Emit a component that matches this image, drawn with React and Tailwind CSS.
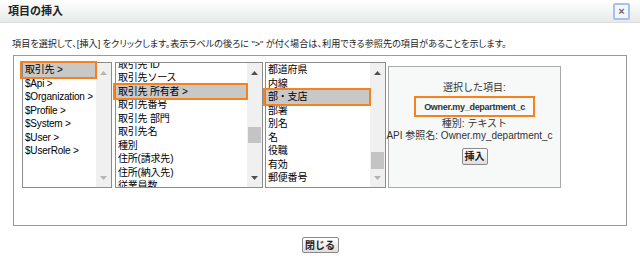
import React from "react";

const FONT = "[font-family:'Liberation_Sans','Noto_Sans_CJK_JP',sans-serif]";

function Arrow({ dir, disabled }) {
  const color = disabled ? "#b4b4b4" : "#505050";
  return (
    <svg width="7" height="4" viewBox="0 0 7 4">
      {dir === "up" ? (
        <polygon points="0,4 7,4 3.5,0" fill={color} />
      ) : (
        <polygon points="0,0 7,0 3.5,4" fill={color} />
      )}
    </svg>
  );
}

function Scrollbar({ thumbTop, thumbH, disabled, downDisabled }) {
  return (
    <div className="flex w-[15px] shrink-0 flex-col bg-[#f0f0f0]">
      <div className="flex h-[20px] items-center justify-center">
        <Arrow dir="up" disabled={disabled} />
      </div>
      <div className="flex-1">
        {thumbH ? (
          <div
            className="mx-[1px] bg-[#c4c4c4]"
            style={{ marginTop: thumbTop, height: thumbH }}
          />
        ) : null}
      </div>
      <div className="flex h-[18px] items-center justify-center">
        <Arrow dir="down" disabled={disabled || downDisabled} />
      </div>
    </div>
  );
}

const ROW = 13.5;

function List({ items, selected, width, offset = 0, scroll }) {
  return (
    <div
      className="relative flex h-[126px] shrink-0 border border-[#8c8c8c] bg-white"
      style={{ width }}
    >
      <div className="relative flex-1 overflow-hidden">
        <div style={{ marginTop: offset }}>
          {items.map((t, i) => (
            <div
              key={i}
              className={
                "h-[13.5px] whitespace-nowrap pl-[2px] text-[10px] leading-[13.5px] tracking-[-0.2px] text-black " +
                (i === selected ? "bg-[#c8c8c8]" : "")
              }
            >
              {t}
            </div>
          ))}
        </div>
      </div>
      <Scrollbar {...scroll} />
      <div
        className="pointer-events-none absolute left-[-3px] right-[14px] border-2 border-[#f5821f]"
        style={{ top: offset + selected * ROW - 2, height: ROW + 4 }}
      />
    </div>
  );
}

function Btn({ children, className = "" }) {
  return (
    <div
      className={
        "flex items-center justify-center rounded-[2px] border border-[#8a8a8a] bg-gradient-to-b from-[#ffffff] to-[#dedede] text-[10px] font-bold text-[#222] " +
        className
      }
    >
      {children}
    </div>
  );
}

export default function App() {
  const list1 = ["取引先 >", "$Api >", "$Organization >", "$Profile >", "$System >", "$User >", "$UserRole >"];
  const list2 = [
    "取引先 ID",
    "取引先ソース",
    "取引先 所有者 >",
    "取引先番号",
    "取引先 部門",
    "取引先名",
    "種別",
    "住所(請求先)",
    "住所(納入先)",
    "従業員数",
  ];
  const list3 = ["都道府県", "内線", "部・支店", "部署", "別名", "名", "役職", "有効", "郵便番号"];

  return (
    <div className={"h-[261px] w-[640px] overflow-hidden bg-white " + FONT}>
      {/* header */}
      <div className="flex h-[23px] items-center justify-between border-b border-[#dcdede] bg-gradient-to-b from-[#ffffff] to-[#e7e9e9] pl-[8px] pr-[10px]">
        <div className="text-[11px] font-bold text-[#222]">項目の挿入</div>
        <div className="flex h-[17px] w-[17px] items-center justify-center rounded-[2px] border-2 border-[#a3c1f3] bg-[#f4f6f8] text-[11px] font-bold leading-none text-[#666]">
          ×
        </div>
      </div>

      {/* instructions */}
      <div className="pl-[12px] pt-[15px] text-[9.15px] leading-[12px] text-[#222] [font-feature-settings:'palt']">
        項目を選択して、[挿入] をクリックします。表示ラベルの後ろに "&gt;" が付く場合は、利用できる参照先の項目があることを示します。
      </div>

      {/* main box */}
      <div className="ml-[13px] mt-[5px] h-[171px] w-[614px] border border-[#9a9a9a] pl-[8px] pt-[6px]">
        <div className="flex items-start">
          <List
            items={list1}
            selected={0}
            width={90}
            scroll={{ disabled: true }}
          />
          <div className="w-[3px]" />
          <List
            items={list2}
            selected={2}
            width={148}
            offset={-5.5}
            scroll={{ thumbTop: 44, thumbH: 16 }}
          />
          <div className="w-[2px]" />
          <List
            items={list3}
            selected={2}
            width={121}
            scroll={{ thumbTop: 69, thumbH: 17, downDisabled: true }}
          />
          <div className="w-[2px]" />
          <div className="mt-[4px] flex h-[122px] w-[173px] flex-col items-center border border-[#a8a8a8] bg-[#f7f8f8] pt-[15px] text-[10px] leading-[12px] text-[#333]">
            <div>選択した項目:</div>
            <div className="mt-[2px] flex h-[21px] w-[121px] items-center justify-center border-2 border-[#f5821f] bg-[#f7f8f8] text-[9px] font-bold tracking-[-0.3px] text-[#333]">
              Owner.my_department_c
            </div>
            <div className="mt-[1px]">種別: テキスト</div>
            <div className="pr-[10px] whitespace-nowrap">API 参照名: Owner.my_department_c</div>
            <Btn className="mt-[6px] h-[17px] w-[26px]">挿入</Btn>
          </div>
        </div>
      </div>

      {/* footer */}
      <div className="flex justify-center pt-[11px]">
        <Btn className="h-[16px] w-[37px]">閉じる</Btn>
      </div>
    </div>
  );
}
